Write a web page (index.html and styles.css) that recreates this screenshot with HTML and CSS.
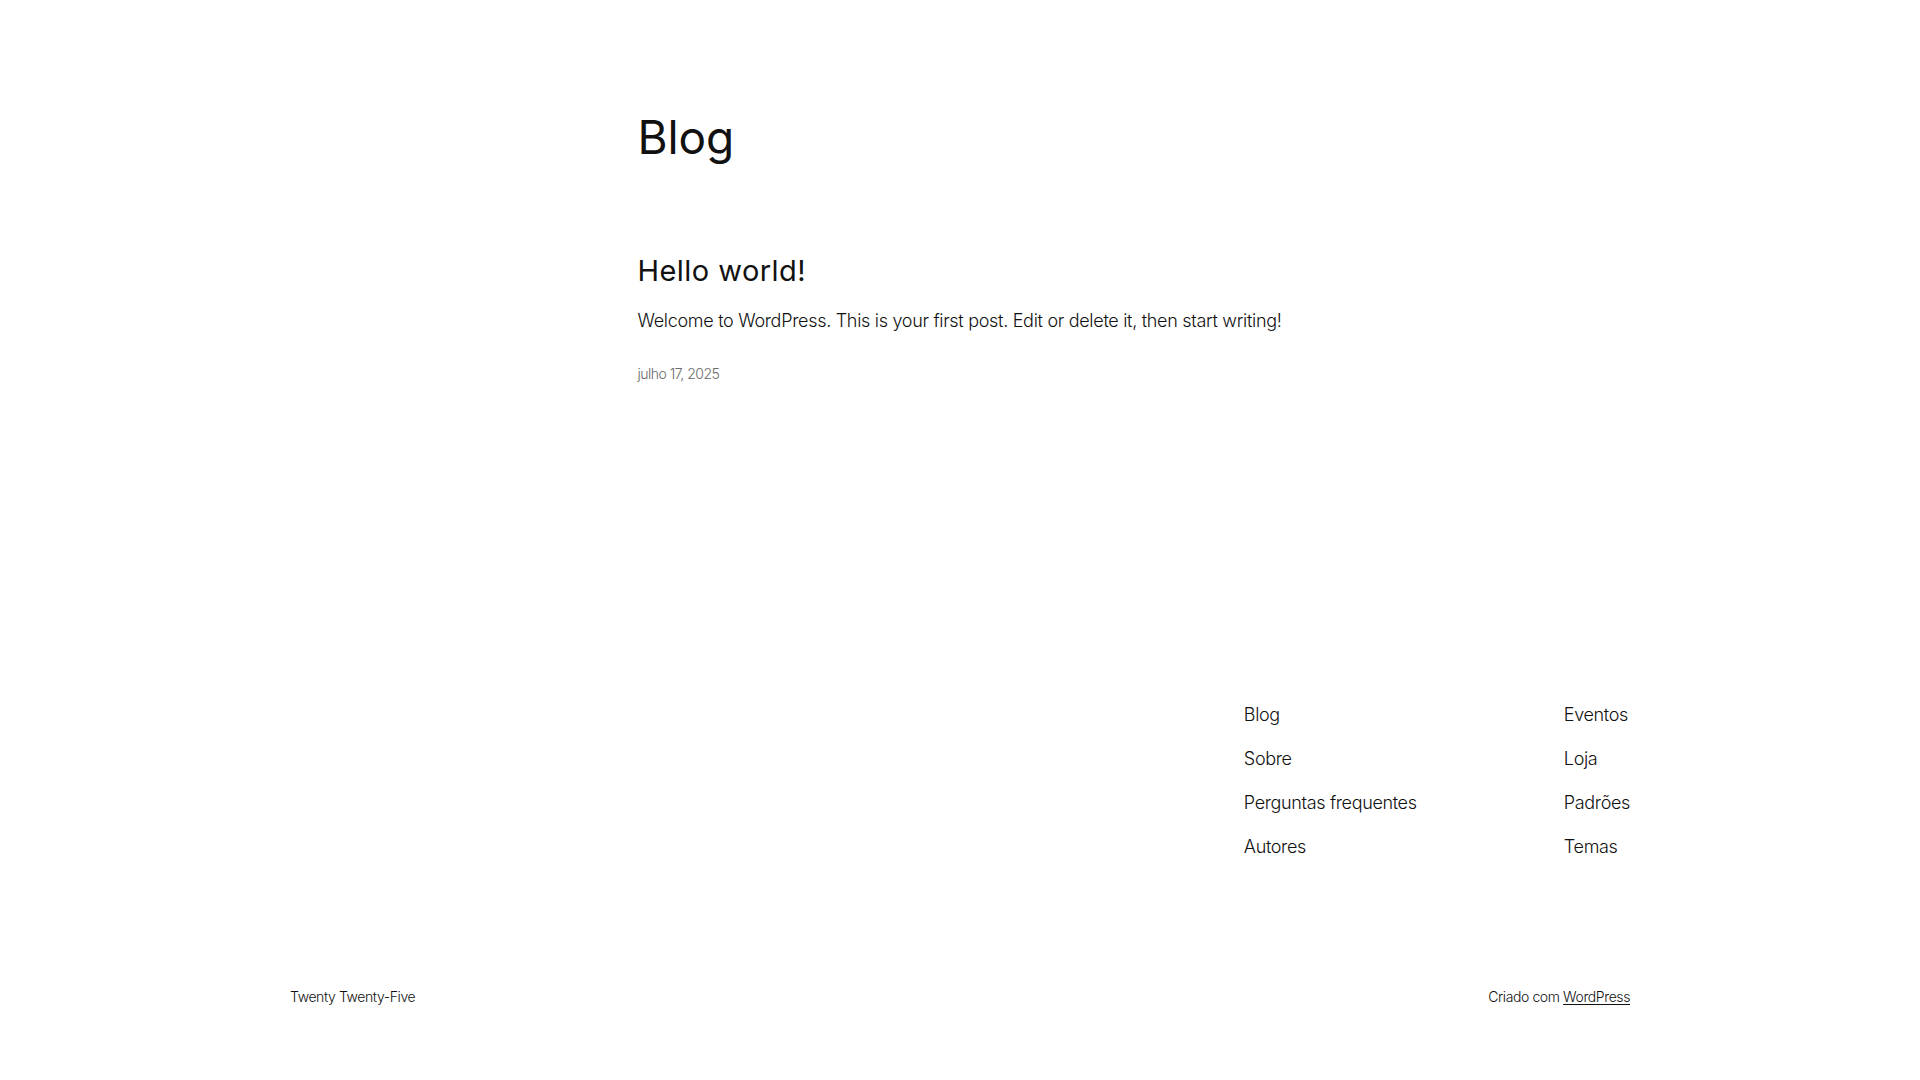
FILE: index.html
```html
<!DOCTYPE html>
<html lang="pt-BR">
<head>
<meta charset="utf-8">
<title>Blog</title>
<link rel="stylesheet" href="styles.css">
</head>
<body>
<main class="main">
  <div class="content">
    <h1 class="page-title">Blog</h1>
    <article class="post">
      <h2 class="post-title">Hello world!</h2>
      <p class="excerpt">Welcome to WordPress. This is your first post. Edit or delete it, then start writing!</p>
      <div class="date">julho 17, 2025</div>
    </article>
  </div>
</main>
<footer class="footer">
  <div class="footer-inner">
    <div class="footer-top">
      <div class="navs">
        <ul class="nav">
          <li>Blog</li>
          <li>Sobre</li>
          <li>Perguntas frequentes</li>
          <li>Autores</li>
        </ul>
        <ul class="nav">
          <li>Eventos</li>
          <li>Loja</li>
          <li>Padrões</li>
          <li>Temas</li>
        </ul>
      </div>
    </div>
    <div class="footer-bottom">
      <span>Twenty Twenty-Five</span>
      <span>Criado com <a class="wp-link" href="#">WordPress</a></span>
    </div>
  </div>
</footer>
</body>
</html>
```
FILE: styles.css
```css
html, body {
  margin: 0;
  padding: 0;
  background: #ffffff;
}
body {
  font-family: Inter, "Noto Sans", sans-serif;
  color: #111111;
}
.main {
  padding-top: 110px;
}
.content {
  width: 645px;
  margin: 0 auto;
}
.page-title {
  margin: 0;
  font-size: 46px;
  font-weight: 400;
  line-height: 54px;
  letter-spacing: -0.1px;
}
.post {
  margin-top: 90px;
}
.post-title {
  margin: 0;
  font-size: 29px;
  font-weight: 400;
  line-height: 33px;
  letter-spacing: 0.45px;
}
.excerpt {
  margin: 21px 0 0;
  font-size: 18px;
  font-weight: 300;
  line-height: 25px;
  letter-spacing: -0.3px;
  white-space: nowrap;
}
.date {
  margin-top: 31px;
  font-size: 14px;
  font-weight: 300;
  line-height: 20px;
  letter-spacing: -0.5px;
  color: #686868;
}
.footer-inner {
  width: 1340px;
  margin: 0 auto;
}
.footer-top {
  display: flex;
  justify-content: flex-end;
  margin-top: 318px;
}
.navs {
  display: grid;
  grid-template-columns: 320px auto;
}
.nav {
  list-style: none;
  margin: 0;
  padding: 0;
  display: flex;
  flex-direction: column;
  gap: 19px;
  font-size: 18px;
  font-weight: 300;
  line-height: 25px;
  letter-spacing: -0.35px;
}
.footer-bottom {
  display: flex;
  justify-content: space-between;
  margin-top: 128px;
  font-size: 14px;
  font-weight: 300;
  line-height: 20px;
  letter-spacing: -0.4px;
}
.wp-link {
  color: #111111;
  text-decoration: underline;
  text-underline-offset: 2px;
}
```
